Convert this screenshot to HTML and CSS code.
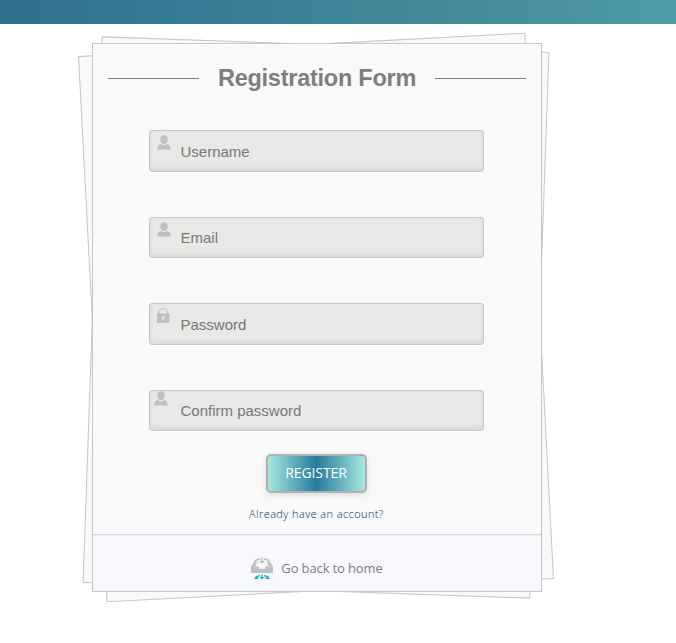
FILE: index.html
```
<!DOCTYPE html>
<html lang="en">
<head>
<meta charset="utf-8">
<title>Registration Form</title>
<link rel="stylesheet" href="styles.css">
</head>
<body>
<svg class="symbols" aria-hidden="true">
  <symbol id="user" viewBox="0 0 14 15"><ellipse cx="7" cy="4.6" rx="3.7" ry="4.4"/><path d="M.2 14.4C.3 11.4 1.4 10 3.8 9.1 5.5 10.7 8.5 10.7 10.2 9.1 12.6 10 13.7 11.4 13.8 14.4Z"/></symbol>
  <symbol id="lock" viewBox="0 0 14 15"><path d="M2 6V4.6C2 2 3.9.6 6.2.6S10.4 2 10.4 4.6V6" fill="none" stroke="#c9c8c8" stroke-width="1.2"/><path fill-rule="evenodd" d="M.5 5.4H11.9Q12.5 5.4 12.5 6V14.3Q12.5 15 11.9 15H.7Q0 15 0 14.3V6Q0 5.4 .5 5.4ZM6.2 8A1.4 1.4 0 0 0 5.5 10.6V12.5H6.9V10.6A1.4 1.4 0 0 0 6.2 8Z"/></symbol>
</svg>
<header class="topbar"></header>
<main class="stack">
  <div class="card">
    <form class="form">
      <h1 class="title">Registration Form</h1>
      <label class="field"><svg class="icon"><use href="#user"/></svg><input type="text" placeholder="Username"></label>
      <label class="field short"><svg class="icon"><use href="#user"/></svg><input type="text" placeholder="Email"></label>
      <label class="field"><svg class="icon"><use href="#lock"/></svg><input type="password" placeholder="Password"></label>
      <label class="field short confirm"><svg class="icon"><use href="#user"/></svg><input type="password" placeholder="Confirm password"></label>
      <button class="register" type="button">REGISTER</button>
      <a class="login">Already have an account?</a>
    </form>
    <footer class="home">
      <svg class="home-icon" viewBox="0 0 22 23">
        <path fill="#bfbfc1" d="M0 9.5H7.8V11.8H14.2V9.5H22V15Q22 16 21 16H1Q0 16 0 15Z"/>
        <path fill="none" stroke="#bfbfc1" stroke-width="1.6" d="M.9 10 4.8 3.2 9 2M21.1 10 17.2 3.2 13 2"/>
        <path fill="#bfbfc1" d="M10.4 0H11.6V4H14L11 6.8 8 4H10.4ZM2 9.5 4.5 5 6 5 4.5 9.5ZM20 9.5 17.5 5 16 5 17.5 9.5Z"/>
        <path fill="#1ca9dc" d="M10.4 17.2H11.6V20H13.7L11 22.5 8.3 20H10.4ZM4.8 19 9 18V19.3L5.5 20.6H7.5V22H3.2ZM17.2 19 13 18V19.3L16.5 20.6H14.5V22H18.8Z"/>
      </svg>
      <a>Go back to home</a>
    </footer>
  </div>
</main>
</body>
</html>
```
FILE: styles.css
```
* { box-sizing: border-box; }
body { margin: 0; min-height: 100vh; background: #fff; font-family: "Open Sans", sans-serif; }
.symbols { display: none; }
.topbar { height: 24px; background: linear-gradient(80deg, #2f718e, #347b94 25%, #438b9b 65%, #4f9ba7); }
.stack { position: relative; width: 450px; height: 549px; margin: 19px 0 0 92px; }
.stack::before, .stack::after {
  content: ""; position: absolute; inset: 1px 2px 1px 0;
  background: #f9f9f9; border: 1px solid #c4c6ca;
}
.stack::before { transform: rotate(-3deg); }
.stack::after { transform: rotate(2deg); }
.card {
  position: relative; z-index: 1; display: flex; flex-direction: column;
  height: 100%; background: #f9f9f9; border: 1px solid #c4c6ca; box-shadow: inset 0 1px #fff;
}
.form { flex: 1; display: flex; flex-direction: column; align-items: center; padding-right: 2px; }
.title {
  align-self: stretch; display: flex; align-items: center; gap: 19px;
  height: 28px; margin: 20px 13px 38px 15px;
  color: #7e7e7e; font: bold 23.5px/28px "Liberation Sans", Arial, sans-serif;
  letter-spacing: -.25px; white-space: nowrap;
}
.title::before, .title::after { content: ""; flex: 1; height: 1px; margin-top: 1px; background: #7e7e7e; }
.field {
  display: flex; align-items: flex-start; width: 335px; height: 42px; margin-bottom: 45px;
  border: 1px solid #c8c8c8; border-radius: 3px;
  background: #e9e8e6; box-shadow: 0 1px 0 #fff, inset 0 -2px 5px rgba(0, 0, 0, .08);
}
.short { height: 41px; }
.confirm { margin-bottom: 23px; }
.icon { flex: none; width: 14px; height: 15px; margin: 4px 10px 0 7px; fill: #c1c0c0; }
.confirm .icon { margin: 0 13px 0 4px; }
.field input {
  flex: 1; min-width: 0; height: 40px; padding: 0; border: 0; outline: 0; background: none;
  font: 15px "Liberation Sans", Arial, sans-serif;
}
.short input { height: 39px; }
.field input::placeholder { color: #777; opacity: 1; }
.register {
  width: 101px; height: 39px; padding: 0 0 2px; border: 2px solid #b0b0b0; border-radius: 5px;
  background: linear-gradient(to right, #a7e8df, #267b9c 50%, #a7e8df);
  color: #fff; font: 14px "Open Sans", sans-serif; letter-spacing: -.1px;
  box-shadow: 0 2px 6px rgba(0, 0, 0, .12);
}
.login { margin: 13px 0 0 1px; color: #002f5c; font-size: 11px; font-weight: 300; line-height: 16px; letter-spacing: .4px; }
.home {
  display: flex; align-items: center; justify-content: center; gap: 8px; height: 57px;
  padding-top: 10px; border-top: 1px solid #cfd5d9; background: #f7f8fb; box-shadow: inset 0 1px #eceff2;
  color: #7e7e7e; font-size: 13px; letter-spacing: -.13px;
}
.home-icon { width: 22px; height: 23px; }
```
